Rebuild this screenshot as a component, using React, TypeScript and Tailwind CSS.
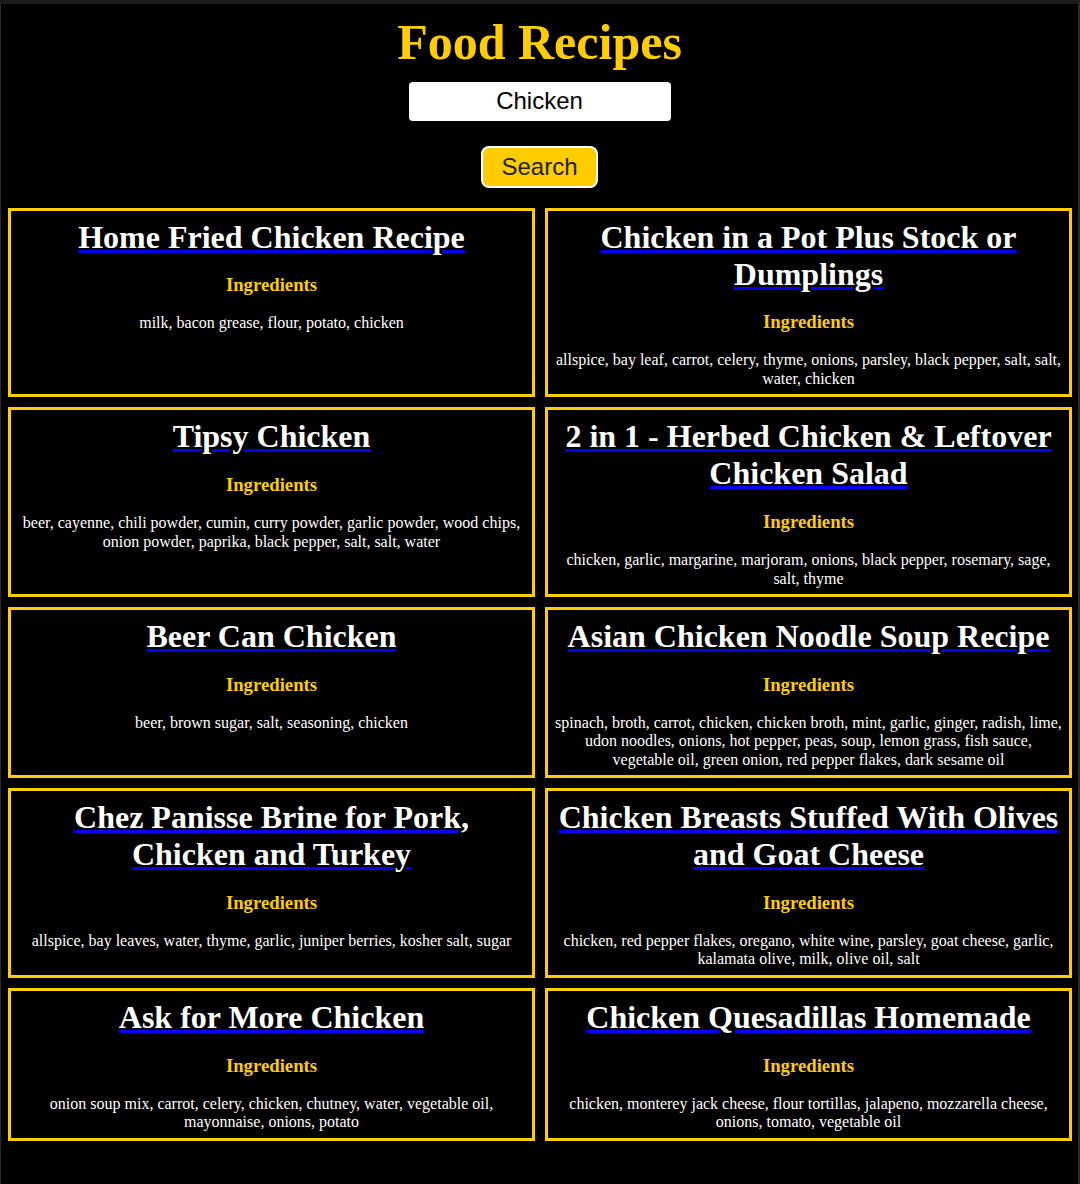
import React from "react";

const recipes: { title: string; ingredients: string }[] = [
  { title: "Home Fried Chicken Recipe", ingredients: "milk, bacon grease, flour, potato, chicken" },
  { title: "Chicken in a Pot Plus Stock or Dumplings", ingredients: "allspice, bay leaf, carrot, celery, thyme, onions, parsley, black pepper, salt, salt, water, chicken" },
  { title: "Tipsy Chicken", ingredients: "beer, cayenne, chili powder, cumin, curry powder, garlic powder, wood chips, onion powder, paprika, black pepper, salt, salt, water" },
  { title: "2 in 1 - Herbed Chicken & Leftover Chicken Salad", ingredients: "chicken, garlic, margarine, marjoram, onions, black pepper, rosemary, sage, salt, thyme" },
  { title: "Beer Can Chicken", ingredients: "beer, brown sugar, salt, seasoning, chicken" },
  { title: "Asian Chicken Noodle Soup Recipe", ingredients: "spinach, broth, carrot, chicken, chicken broth, mint, garlic, ginger, radish, lime, udon noodles, onions, hot pepper, peas, soup, lemon grass, fish sauce, vegetable oil, green onion, red pepper flakes, dark sesame oil" },
  { title: "Chez Panisse Brine for Pork, Chicken and Turkey", ingredients: "allspice, bay leaves, water, thyme, garlic, juniper berries, kosher salt, sugar" },
  { title: "Chicken Breasts Stuffed With Olives and Goat Cheese", ingredients: "chicken, red pepper flakes, oregano, white wine, parsley, goat cheese, garlic, kalamata olive, milk, olive oil, salt" },
  { title: "Ask for More Chicken", ingredients: "onion soup mix, carrot, celery, chicken, chutney, water, vegetable oil, mayonnaise, onions, potato" },
  { title: "Chicken Quesadillas Homemade", ingredients: "chicken, monterey jack cheese, flour tortillas, jalapeno, mozzarella cheese, onions, tomato, vegetable oil" },
];

export default function App() {
  return (
    <div className="min-h-[1184px] bg-black border-t-4 border-t-[#1a1a1a] border-l border-r-2 border-l-[#2a2a2a] border-r-[#2a2a2a] font-['Liberation_Serif',serif] text-white">
      <h1 className="mt-[10px] mb-[10px] text-center text-[50px] font-bold leading-[1.15] text-[#ffcc00]">
        Food Recipes
      </h1>
      <div className="flex flex-col items-center">
        <input
          readOnly
          value="Chicken"
          className="w-[262px] h-[39px] rounded-[4px] bg-white text-center text-[24px] text-black font-['Liberation_Sans',sans-serif] outline-none"
        />
        <button className="mt-[25px] h-[42px] px-[18px] rounded-[8px] border-2 border-white bg-[#ffcc00] text-[24px] leading-none text-[#222] font-['Liberation_Sans',sans-serif]">
          Search
        </button>
      </div>
      <div className="mt-[20px] pl-[7px] pr-[6px] grid grid-cols-2 gap-x-[10px] gap-y-[10px]">
        {recipes.map((r) => (
          <div key={r.title} className="border-[3px] border-[#ffcc00] pt-[8px] pb-[6px] px-[6px] text-center">
            <h2 className="m-0 text-[32px] font-bold leading-[37px]">
              <a href="#" className="text-white underline decoration-[#0000ee] decoration-[3px]">
                {r.title}
              </a>
            </h2>
            <h3 className="mt-[18.72px] mb-[18.72px] text-[18.72px] font-bold leading-[1.15] text-[#ffcc00]">
              Ingredients
            </h3>
            <p className="m-0 text-[16px] leading-[1.15]">{r.ingredients}</p>
          </div>
        ))}
      </div>
    </div>
  );
}
